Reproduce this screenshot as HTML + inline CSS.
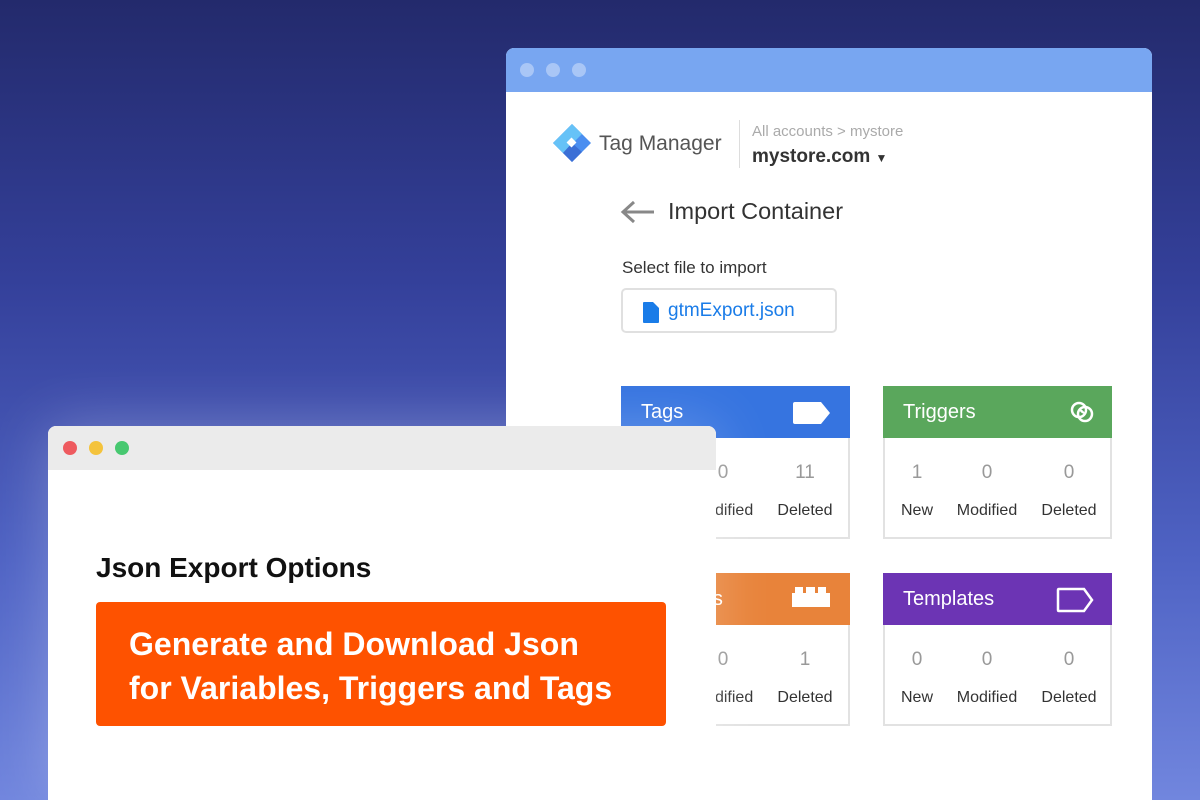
<!DOCTYPE html>
<html style="width:1200px;height:800px;overflow:hidden;background:#7186de"><head><style>
*{margin:0;padding:0;box-sizing:border-box}
body{width:1200px;height:800px;overflow:hidden;position:relative;font-family:"Liberation Sans","DejaVu Sans",sans-serif;background:linear-gradient(180deg,#232a6c 0%,#34409a 35%,#4f63c4 70%,#7186de 100%)}
.win{position:absolute;background:#fff;overflow:hidden}
.back{left:506px;top:48px;width:646px;height:752px;border-radius:8px 8px 0 0}
.back .bar{height:44px;background:#78a6f1;position:relative}
.dot{position:absolute;top:15px;width:14px;height:14px;border-radius:50%}
.front{left:48px;top:426px;width:668px;height:374px;border-radius:8px 8px 0 0;box-shadow:0 0 60px rgba(255,255,255,.25)}
.front .bar{height:44px;background:#ebebeb;position:relative}
.abs{position:absolute}
.card{position:absolute;width:229px;height:153px;border:2px solid #e2e2e2;border-top:none}
.card .h{height:52px;color:#fff;font-size:20px;padding:15px 0 0 20px;margin:0 -2px;position:relative}
.card .n{position:absolute;top:76px;font-size:19px;color:#999;width:80px;text-align:center}
.card .l{position:absolute;top:116px;font-size:16px;color:#333;width:80px;text-align:center}
</style></head><body>
<div class="win back">
 <div class="bar"><div class="dot" style="left:14px;background:#a9c6f6"></div><div class="dot" style="left:40px;background:#a9c6f6"></div><div class="dot" style="left:66px;background:#a9c6f6"></div></div>
 <svg class="abs" style="left:46px;top:75px" width="40" height="40" viewBox="0 0 40 40"><path d="M20 1 L39 20 L20 39 L1 20Z" fill="#4a8ef0"/><path d="M20 1 L30 11 L11 30 L1 20Z" fill="#66c2f7"/><path d="M20 39 L30 29 L20 20 L11 30Z" fill="#3b6fd6"/><rect x="16" y="16" width="7" height="7" fill="#fff" transform="rotate(45 19.5 19.5)"/></svg>
 <div class="abs" style="left:93px;top:84px;font-size:21px;color:#555">Tag Manager</div>
 <div class="abs" style="left:233px;top:72px;width:1px;height:48px;background:#ddd"></div>
 <div class="abs" style="left:246px;top:75px;font-size:15px;color:#aaa">All accounts &gt; mystore</div>
 <div class="abs" style="left:246px;top:98px;font-size:19px;color:#333;font-weight:bold">mystore.com <span style="font-size:12px">▼</span></div>
 <svg class="abs" style="left:114px;top:152px" width="36" height="24" viewBox="0 0 36 24"><path d="M34 12H4M14 2L3 12L14 22" stroke="#888" stroke-width="3" fill="none"/></svg>
 <div class="abs" style="left:162px;top:150px;font-size:23.5px;color:#333">Import Container</div>
 <div class="abs" style="left:116px;top:210px;font-size:17px;color:#333">Select file to import</div>
 <div class="abs" style="left:115px;top:240px;width:216px;height:45px;border:2px solid #e0e0e0;border-radius:5px"></div>
 <svg class="abs" style="left:137px;top:254px" width="16" height="21" viewBox="0 0 16 21"><path d="M0 1Q0 0 1 0H10L16 6V20Q16 21 15 21H1Q0 21 0 20Z" fill="#1a7ce8"/></svg>
 <div class="abs" style="left:162px;top:252px;font-size:19px;color:#1a7ce8">gtmExport.json</div>
 <div class="card" style="left:115px;top:338px"><div class="h" style="background:#3674e0">Tags<svg class="abs" style="right:20px;top:16px" width="37" height="22"><path d="M2 0H28L37 11L28 22H2Q0 22 0 20V2Q0 0 2 0Z" fill="#fff"/></svg></div><div class="n" style="left:60px">0</div><div class="n" style="left:142px">11</div><div class="l" style="left:60px">Modified</div><div class="l" style="left:142px">Deleted</div></div>
 <div class="card" style="left:377px;top:338px"><div class="h" style="background:#5aa75c">Triggers<svg class="abs" style="right:18px;top:14px" width="24" height="24"><circle cx="9" cy="10" r="7" stroke="#fff" stroke-width="2.5" fill="none"/><circle cx="15" cy="14" r="7" stroke="#fff" stroke-width="2.5" fill="none"/><path d="M9 9A7 7 0 0 1 15 14A7 7 0 0 1 9 9Z" fill="#fff"/></svg></div><div class="n" style="left:-8px">1</div><div class="n" style="left:62px">0</div><div class="n" style="left:144px">0</div><div class="l" style="left:-8px">New</div><div class="l" style="left:62px">Modified</div><div class="l" style="left:144px">Deleted</div></div>
 <div class="card" style="left:115px;top:525px"><div class="h" style="background:#e8833a">Variables<svg class="abs" style="right:20px;top:14px" width="38" height="20"><path d="M0 6H3V0H11V6H14V0H23V6H26V0H34V6H38V20H0Z" fill="#fff"/></svg></div><div class="n" style="left:60px">0</div><div class="n" style="left:142px">1</div><div class="l" style="left:60px">Modified</div><div class="l" style="left:142px">Deleted</div></div>
 <div class="card" style="left:377px;top:525px"><div class="h" style="background:#6c34b4">Templates<svg class="abs" style="right:18px;top:14px" width="38" height="26"><path d="M3 2H28L36 13L28 24H3Q2 24 2 23V3Q2 2 3 2Z" stroke="#fff" stroke-width="2.5" fill="none"/></svg></div><div class="n" style="left:-8px">0</div><div class="n" style="left:62px">0</div><div class="n" style="left:144px">0</div><div class="l" style="left:-8px">New</div><div class="l" style="left:62px">Modified</div><div class="l" style="left:144px">Deleted</div></div>
</div>
<div class="win front">
 <div class="bar"><div class="dot" style="left:15px;background:#ee5a5f"></div><div class="dot" style="left:41px;background:#f4c33c"></div><div class="dot" style="left:67px;background:#47c870"></div></div>
 <div class="abs" style="left:48px;top:126px;font-size:28px;font-weight:bold;color:#111">Json Export Options</div>
 <div class="abs" style="left:48px;top:176px;width:570px;height:124px;background:#fe5200;border-radius:4px;color:#fff;font-size:32px;font-weight:bold;padding:20px 0 0 33px;line-height:44px;white-space:nowrap">Generate and Download Json<br>for Variables, Triggers and Tags</div>
</div>
</body></html>
